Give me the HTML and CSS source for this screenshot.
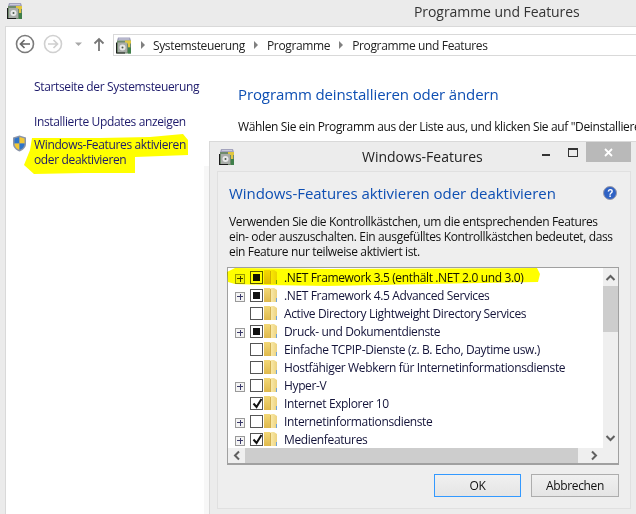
FILE: index.html
```html
<!DOCTYPE html>
<html lang="de">
<head>
<meta charset="utf-8">
<title>Programme und Features</title>
<link rel="stylesheet" href="styles.css">
</head>
<body>
<svg class="defs" width="0" height="0">
  <defs>
    <linearGradient id="fgold" x1="0" y1="0" x2="0" y2="1"><stop offset="0" stop-color="#f3d877"/><stop offset="1" stop-color="#dfb94c"/></linearGradient>
    <linearGradient id="fpale" x1="0" y1="0" x2="1" y2="0"><stop offset="0" stop-color="#f9e9a8"/><stop offset="1" stop-color="#ecd27f"/></linearGradient>
  </defs>
  <symbol id="cp" viewBox="0 0 16 16">
    <path d="M2 0h12l1 3H1z" fill="#a3a3bd"/>
    <path d="M3 1h10v1H3z" fill="#c9c9da"/>
    <rect x="1" y="3" width="14" height="13" fill="#6f8a6c"/>
    <rect x="9" y="3" width="6" height="3" fill="#e0c63f"/>
    <rect x="12" y="5" width="2" height="5" fill="#e0c63f"/>
    <rect x="12" y="10" width="3" height="6" fill="#3f7f4a"/>
    <rect x="2" y="5" width="9" height="10" fill="#a9ada9"/>
    <circle cx="6.500" cy="10" r="3" fill="#e8e8e8"/>
    <circle cx="6.500" cy="10" r="1" fill="#4d5b4d"/>
    <path d="M0 5h1v10h8v1H0z" fill="#1c1c1c"/>
  </symbol>
  <symbol id="folder" viewBox="0 0 14 16">
    <path d="M0 1h6l1 1v13H0z" fill="url(#fgold)"/>
    <path d="M7 1h3l3 2v12H7z" fill="url(#fpale)"/>
    <path d="M6 2h1v13H6z" fill="#d2b050"/>
    <path d="M12 11h1v4h-1z" fill="#6fa3d8"/>
  </symbol>
</svg>

<header class="titlebar">
  <svg class="appicon"><use href="#cp"/></svg>
  <span class="title">Programme und Features</span>
</header>

<main class="window">
  <nav class="toolbar">
    <svg class="navicons" width="102" height="24" viewBox="0 0 102 24">
      <circle cx="12" cy="12" r="8.500" fill="none" stroke="#7b7b7b" stroke-width="1.600"/>
      <path d="M17 12H8M11.500 8 7.500 12l4 4" fill="none" stroke="#666" stroke-width="1.700"/>
      <circle cx="40" cy="12" r="8.500" fill="none" stroke="#d0d0d0" stroke-width="1.600"/>
      <path d="M35 12h9M40.500 8l4 4-4 4" fill="none" stroke="#cfcfcf" stroke-width="1.700"/>
      <path d="M62 10.500h7l-3.500 3.500z" fill="#a8a8a8"/>
      <path d="M86 19V7M81.500 11.500 86 7l4.500 4.500" fill="none" stroke="#777" stroke-width="1.800"/>
    </svg>
    <div class="address">
      <svg class="crumbicon"><use href="#cp"/></svg>
      <i class="sep"></i><span>Systemsteuerung</span>
      <i class="sep"></i><span>Programme</span>
      <i class="sep"></i><span>Programme und Features</span>
    </div>
  </nav>
  <div class="content">
    <aside class="side">
      <a class="first">Startseite der Systemsteuerung</a>
      <a>Installierte Updates anzeigen</a>
      <a class="shielded">
        <svg class="shield" width="15" height="17" viewBox="0 0 15 17">
          <path d="M7.500.5 14 2.500V9c0 3.500-3 6-6.500 7.500C4 15 1 12.500 1 9V2.500z" fill="#8a94a8"/>
          <path d="M7.500 2 2.500 3.500V8.500h5z" fill="#2f74c8"/>
          <path d="M7.500 2l5 1.500V8.500h-5z" fill="#f2c833"/>
          <path d="M2.500 8.500h5V15C5 14 2.500 12 2.500 8.500z" fill="#f2c833"/>
          <path d="M7.500 8.500h5c0 3.500-2.500 5.500-5 6.500z" fill="#2f74c8"/>
        </svg>
        Windows-Features aktivieren<br>oder deaktivieren
      </a>
    </aside>
    <section class="pane">
      <h1>Programm deinstallieren oder ändern</h1>
      <p>Wählen Sie ein Programm aus der Liste aus, und klicken Sie auf "Deinstallieren"</p>
    </section>
  </div>
</main>

<svg class="marker marker-side" width="165" height="41" viewBox="0 0 165 41">
  <path d="M8 4 76 4 126 3 159 0 164 6 164 21 111 23 111 39 60 39 10 40 0 31 6 16z" fill="#ffff00"/>
</svg>

<section class="dialog">
  <header class="dlg-title">
    <svg class="dlg-icon"><use href="#cp"/></svg>
    <span class="dlg-name">Windows-Features</span>
    <div class="controls">
      <i class="min"></i><i class="max"></i>
      <span class="close"><svg width="9" height="9" viewBox="0 0 9 9"><path d="M1 1l7 7M8 1 1 8" stroke="#fff" stroke-width="1.800"/></svg></span>
    </div>
  </header>
  <div class="dlg-body">
    <div class="dlg-head">
      <h2>Windows-Features aktivieren oder deaktivieren</h2>
      <svg class="help" width="14" height="14" viewBox="0 0 14 14">
        <circle cx="7" cy="7" r="6.500" fill="#2f62c4" stroke="#9a9aa8"/>
        <text x="7" y="11" text-anchor="middle" class="help-q">?</text>
      </svg>
    </div>
    <p class="dlg-text">Verwenden Sie die Kontrollkästchen, um die entsprechenden Features<br>ein- oder auszuschalten. Ein ausgefülltes Kontrollkästchen bedeutet, dass<br>ein Feature nur teilweise aktiviert ist.</p>
    <div class="list">
      <svg class="marker marker-list" width="314" height="19" viewBox="0 0 314 19">
        <path d="M0 4 8 0 100 1 310 0 313 6 311 14 200 16 100 18 40 17 8 16 1 14z" fill="#ffff00"/>
      </svg>
      <ul class="rows">
        <li><i class="plus"></i><i class="box mixed"></i><svg class="fld"><use href="#folder"/></svg><span>.NET Framework 3.5 (enthält .NET 2.0 und 3.0)</span></li>
        <li><i class="plus"></i><i class="box mixed"></i><svg class="fld"><use href="#folder"/></svg><span>.NET Framework 4.5 Advanced Services</span></li>
        <li><i class="noplus"></i><i class="box"></i><svg class="fld"><use href="#folder"/></svg><span>Active Directory Lightweight Directory Services</span></li>
        <li><i class="plus"></i><i class="box mixed"></i><svg class="fld"><use href="#folder"/></svg><span>Druck- und Dokumentdienste</span></li>
        <li><i class="noplus"></i><i class="box"></i><svg class="fld"><use href="#folder"/></svg><span>Einfache TCPIP-Dienste (z. B. Echo, Daytime usw.)</span></li>
        <li><i class="noplus"></i><i class="box"></i><svg class="fld"><use href="#folder"/></svg><span>Hostfähiger Webkern für Internetinformationsdienste</span></li>
        <li><i class="plus"></i><i class="box"></i><svg class="fld"><use href="#folder"/></svg><span>Hyper-V</span></li>
        <li><i class="noplus"></i><i class="box"><svg class="tick" viewBox="0 0 11 11"><path d="M1.500 5.500 4.500 9 9.500 1" fill="none" stroke="#111" stroke-width="2"/></svg></i><svg class="fld"><use href="#folder"/></svg><span>Internet Explorer 10</span></li>
        <li><i class="plus"></i><i class="box"></i><svg class="fld"><use href="#folder"/></svg><span>Internetinformationsdienste</span></li>
        <li><i class="plus"></i><i class="box"><svg class="tick" viewBox="0 0 11 11"><path d="M1.500 5.500 4.500 9 9.500 1" fill="none" stroke="#111" stroke-width="2"/></svg></i><svg class="fld"><use href="#folder"/></svg><span>Medienfeatures</span></li>
      </ul>
      <div class="vbar">
        <svg width="11" height="7" viewBox="0 0 11 7"><path d="M1.500 6 5.500 2l4 4" fill="none" stroke="#606060" stroke-width="2"/></svg>
        <i class="vthumb"></i>
        <svg class="vdown" width="11" height="7" viewBox="0 0 11 7"><path d="M1.500 1l4 4 4-4" fill="none" stroke="#606060" stroke-width="2"/></svg>
      </div>
      <div class="hbar">
        <svg width="7" height="11" viewBox="0 0 7 11"><path d="M6 1.500 2 5.500l4 4" fill="none" stroke="#606060" stroke-width="2"/></svg>
        <i class="hthumb"></i>
        <svg width="7" height="11" viewBox="0 0 7 11"><path d="M1 1.500l4 4-4 4" fill="none" stroke="#606060" stroke-width="2"/></svg>
      </div>
    </div>
    <div class="buttons">
      <button class="btn default">OK</button>
      <button class="btn">Abbrechen</button>
    </div>
  </div>
</section>
</body>
</html>
```
FILE: styles.css
```css
* { box-sizing: border-box; }
html, body { margin: 0; height: 100%; }
body {
  width: 636px; height: 514px; overflow: hidden; position: relative;
  background: #ebebeb; color: #1a1a1a;
  font: 12px/15px "Open Sans", "Noto Sans", sans-serif;
  letter-spacing: -.36px;
}
i { display: block; font-style: normal; }
svg { display: block; }
.defs { position: absolute; }

.titlebar { height: 26px; display: flex; align-items: center; position: relative; padding-left: 7px; }
.appicon { width: 16px; height: 16px; align-self: flex-start; margin-top: 3px; }
.title { margin-left: 391px; margin-top: -3px; font-size: 14px; letter-spacing: -.07px; color: #333; white-space: nowrap; }

.window { height: 488px; margin-left: 5px; background: #fff; border-top: 1px solid #d9d9d9; border-left: 1px solid #d9d9d9; }
.toolbar { display: flex; align-items: center; height: 28px; padding-top: 6px; padding-left: 7px; }
.navicons { flex: none; }
.address {
  flex: 1; height: 22px; margin-left: -2px; align-self: flex-start; margin-top: 1px; display: flex; align-items: center;
  border: 1px solid #d9d9d9; border-right: 0; padding-left: 2px; color: #222; white-space: nowrap;
}
.crumbicon { width: 16px; height: 17px; }
.sep { width: 0; height: 0; margin: 0 9px 0 9px; border-left: 4px solid #808080; border-top: 4px solid transparent; border-bottom: 4px solid transparent; }
.address span:first-of-type { margin-left: -1px; }

.content { display: flex; }
.side { width: 204px; flex: none; padding: 24px 0 0 28px; display: flex; flex-direction: column; }
.side a { color: #1d1a6b; display: block; position: relative; }
.side .first { margin-bottom: 20px; }
.side .shielded { margin-top: 8px; line-height: 15px; z-index: 2; }
.shield { position: absolute; left: -22px; top: -2px; }
.pane { padding: 29px 0 0 28px; white-space: nowrap; overflow: hidden; flex: 1; }
.pane h1 { margin: 0; font-size: 15px; line-height: 20px; font-weight: 400; color: #0e4fb3; letter-spacing: -.11px; }
.pane p { margin: 15px 0 0; color: #111; }

.marker { position: absolute; }
.marker-side { left: 24px; top: 134px; z-index: 1; mix-blend-mode: multiply; }

.dialog {
  position: absolute; left: 209px; top: 141px; width: 427px; height: 373px;
  background: #ececec; border-left: 1px solid #d9d9d9; border-top: 1px solid #d9d9d9;
  box-shadow: -5px 25px 0 0 #f7f7f7;
}
.dlg-title { height: 29px; position: relative; display: flex; align-items: center; }
.dlg-icon { width: 16px; height: 16px; margin-left: 9px; flex: none; }
.dlg-name { margin-left: 127px; font-size: 14px; letter-spacing: 0; color: #222; }
.controls { position: absolute; right: 5px; top: 0; display: flex; align-items: flex-start; }
.min { width: 8px; height: 2px; background: #333; margin: 12px 18px 0 0; }
.max { width: 10px; height: 9px; border: 1.500px solid #333; border-top-width: 2px; margin: 6px 8px 0 0; }
.close { width: 45px; height: 20px; background: #b9b9b9; display: flex; align-items: center; justify-content: center; }

.dlg-body {
  width: 414px; height: 338px; margin-left: 7px;
  border: 1px solid #e0e0e0; background: #eeeeee; padding: 10px 0 0 11px; position: relative;
}
.dlg-head { display: flex; align-items: center; height: 22px; }
.dlg-head h2 { margin: 0; font-size: 15px; font-weight: 400; color: #0e4fb3; letter-spacing: -.05px; line-height: 20px; width: 374px; flex: none; }
.help-q { font: bold 10px "Liberation Sans", sans-serif; fill: #fff; }
.dlg-text { margin: 10px 0 0; color: #111; line-height: 15px; white-space: nowrap; }

.list {
  width: 392px; height: 198px; margin: 8px 0 0 -2px; position: relative;
  border: 1px solid #a0a0a0; border-bottom-width: 2px;
  background: #fff;
}
.marker-list { left: -1px; top: 0; mix-blend-mode: multiply; z-index: 3; pointer-events: none; }
.rows { list-style: none; margin: 0; padding: 0; height: 180px; overflow: hidden; white-space: nowrap; }
.rows li { height: 18px; display: flex; align-items: center; padding-left: 7px; color: #14143a; }
.plus {
  width: 10px; height: 10px; border: 1px solid #9a9a9a; position: relative; flex: none; margin-top: 3px;
  background: linear-gradient(#3a3a6a, #3a3a6a) center / 6px 1px no-repeat, linear-gradient(#3a3a6a, #3a3a6a) center / 1px 6px no-repeat, #f4f4f4;
}
.noplus { width: 10px; flex: none; }
.box { width: 13px; height: 13px; margin-left: 5px; border: 1px solid #555; background: #fff; flex: none; position: relative; }
.box.mixed { background: linear-gradient(#111, #111) center / 7px 7px no-repeat, #fff; }
.tick { position: absolute; left: 1px; top: 0; width: 11px; height: 11px; }
.fld { width: 14px; height: 16px; flex: none; margin-left: 1px; margin-right: 6px; }
.vbar {
  position: absolute; right: 0; top: 0; width: 15px; height: 180px; background: #efefef;
  display: flex; flex-direction: column; align-items: center; padding-top: 6px;
}
.vthumb { width: 15px; height: 46px; margin-top: 5px; background: #cdcdcd; flex: none; }
.vdown { margin-top: auto; margin-bottom: 6px; }
.hbar {
  position: absolute; left: 0; bottom: 0; right: 0; height: 15px; background: #efefef;
  display: flex; align-items: center; padding: 0 20px 0 5px;
}
.hthumb { flex: 1; height: 15px; margin: 0 13px 0 5px; background: #cdcdcd; }

.buttons { display: flex; gap: 10px; margin: 9px 0 0 205px; }
.btn {
  height: 23px; padding: 0; font: inherit; letter-spacing: inherit; color: #111;
  border: 1px solid #adadad; background: linear-gradient(#f0f0f0, #e5e5e5); border-radius: 0;
}
.btn { width: 88px; }
.btn.default { width: 87px; border: 1px solid #3399ff; }
```
